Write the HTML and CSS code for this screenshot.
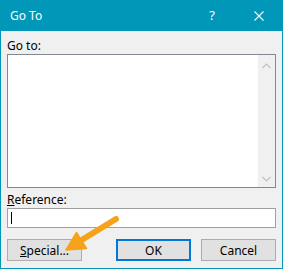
FILE: index.html
```html
<!DOCTYPE html>
<html>
<head>
<meta charset="utf-8">
<link rel="stylesheet" href="styles.css">
</head>
<body>
<div class="window">
  <div class="titlebar">
    <span class="title">Go To</span>
    <span class="help">?</span>
    <svg class="close" width="10" height="10" viewBox="0 0 10 10"><path d="M0.5 0.5 L9.5 9.5 M9.5 0.5 L0.5 9.5" stroke="#fff" stroke-width="1.1" fill="none"/></svg>
  </div>
  <div class="content">
    <div class="label">Go to:</div>
    <div class="listbox">
      <div class="list-area"></div>
      <div class="scrollbar">
        <svg width="9" height="6" viewBox="0 0 9 6"><path d="M0.5 5 L4.5 1 L8.5 5" stroke="#c2c2c2" stroke-width="1.2" fill="none"/></svg>
        <svg width="9" height="6" viewBox="0 0 9 6"><path d="M0.5 1 L4.5 5 L8.5 1" stroke="#c2c2c2" stroke-width="1.2" fill="none"/></svg>
      </div>
    </div>
    <div class="label ref-label"><u>R</u>eference:</div>
    <div class="input"><span class="caret"></span></div>
    <div class="buttons">
      <div class="btn"><u>S</u>pecial...</div>
      <div class="spacer"></div>
      <div class="btn default">OK</div>
      <div class="btn">Cancel</div>
    </div>
  </div>
  <svg class="arrow" width="283" height="269" viewBox="0 0 283 269">
    <line x1="116" y1="219" x2="80" y2="241" stroke="#f6a31b" stroke-width="6" stroke-linecap="round"/>
    <polygon points="66,250 76.5,232.5 86.5,248.5" fill="#f6a31b" stroke="#f6a31b" stroke-width="1.5" stroke-linejoin="round"/>
  </svg>
</div>
</body>
</html>
```
FILE: styles.css
```css
html, body {
  margin: 0;
  padding: 0;
  background: #f0f0f0;
}
.window {
  position: relative;
  width: 283px;
  height: 269px;
  box-sizing: border-box;
  border: 1px solid #0097b9;
  border-top: none;
  background: #f0f0f0;
  font-family: "Noto Sans", "Open Sans", sans-serif;
  font-size: 12px;
  color: #000;
}
.titlebar {
  height: 31px;
  background: #0097b9;
  margin: 0 -1px;
  display: flex;
  align-items: center;
  color: #fff;
}
.title {
  margin-left: 10px;
  font-size: 12px;
  flex: 1;
  margin-top: -1px;
}
.help {
  font-size: 13px;
  margin-right: 39px;
  margin-top: -1px;
}
.close {
  margin-right: 19px;
}
.content {
  padding: 6px 6px 0 6px;
  display: flex;
  flex-direction: column;
}
.label {
  height: 17px;
  line-height: 17px;
}
.listbox {
  height: 134px;
  box-sizing: border-box;
  border: 1px solid #828790;
  display: flex;
  background: #fff;
}
.list-area {
  flex: 1;
}
.scrollbar {
  width: 17px;
  background: #f0f0f0;
  display: flex;
  flex-direction: column;
  justify-content: space-between;
  align-items: center;
  padding: 8px 0 5px;
}
.scrollbar svg {
  display: block;
}
.ref-label {
  margin-top: 3px;
}
.input {
  height: 20px;
  box-sizing: border-box;
  border: 1px solid #a0a0a0;
  background: #fff;
  display: flex;
  align-items: center;
  padding-left: 3px;
}
.caret {
  width: 1px;
  height: 12px;
  background: #000;
}
.buttons {
  margin-top: 11px;
  display: flex;
  gap: 10px;
}
.spacer {
  flex: 1;
}
.btn {
  width: 75px;
  height: 22px;
  box-sizing: border-box;
  border: 1px solid #adadad;
  background: #e1e1e1;
  display: flex;
  align-items: center;
  justify-content: center;
}
.btn.default {
  border: 2px solid #0078d7;
}
.arrow {
  position: absolute;
  left: -1px;
  top: 0;
  pointer-events: none;
}
```
